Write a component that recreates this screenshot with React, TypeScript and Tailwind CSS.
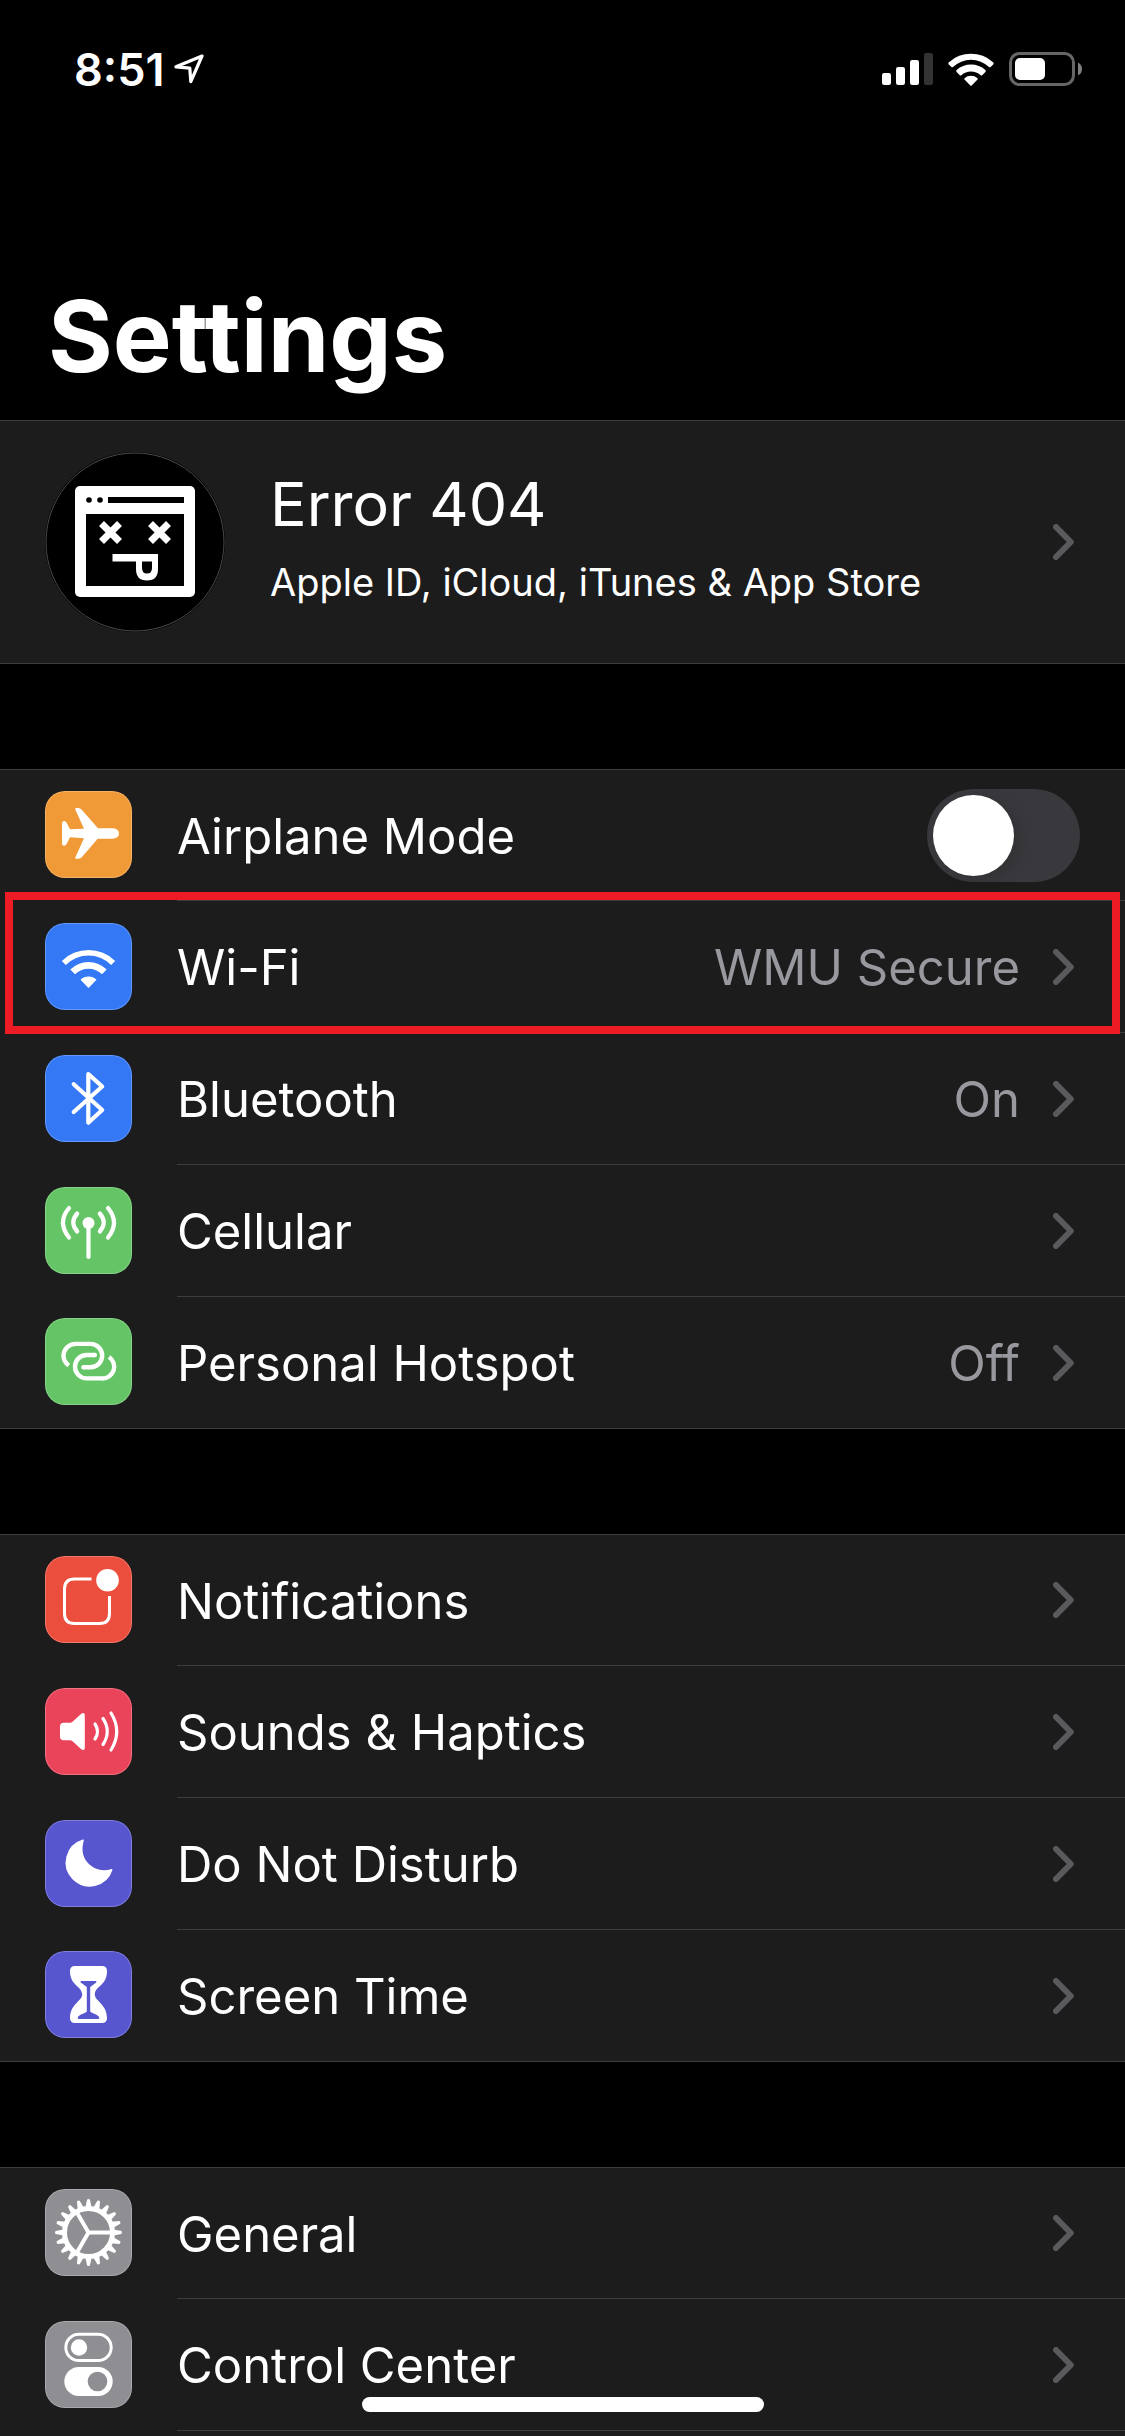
import React from 'react';

function LocationArrow() {
  return (
    <svg viewBox="0 0 30 30" className="size-[30px]" fill="none" stroke="white" strokeWidth="3.2" strokeLinejoin="round" aria-hidden="true">
      <path d="M28 2 L2 12.8 L15.8 14.2 L16.8 27.6 Z" />
    </svg>
  );
}

function SignalBars() {
  return (
    <svg viewBox="0 0 51 32" className="h-8 w-[51px]" fill="white" aria-hidden="true">
      <rect x="0" y="20" width="9" height="12" rx="2.2" />
      <rect x="14" y="14" width="9" height="18" rx="2.2" />
      <rect x="28" y="7" width="9" height="25" rx="2.2" />
      <rect x="42" y="0" width="9" height="32" rx="2.2" fill="#333333" />
    </svg>
  );
}

function StatusWifi() {
  return (
    <svg viewBox="0 0 46 33" className="h-[33px] w-[46px]" fill="white" aria-hidden="true">
      <path d="M1 9.2 A32.6 32.6 0 0 1 45 9.2 Q46.2 10.3 45.2 11.4 L42.6 14 Q41.8 14.7 41 14 A26 26 0 0 0 5 14 Q4.2 14.7 3.4 14 L.8 11.4 Q-.2 10.3 1 9.2 Z" />
      <path d="M8.6 17.1 A21.5 21.5 0 0 1 37.4 17.1 Q38.4 18.1 37.4 19.1 L34.2 22.2 Q33.4 22.9 32.6 22.2 A14.4 14.4 0 0 0 13.4 22.2 Q12.6 22.9 11.8 22.2 L8.6 19.1 Q7.6 18.1 8.6 17.1 Z" />
      <path d="M16.5 25.2 A10 10 0 0 1 29.5 25.2 Q30.2 25.9 29.5 26.6 L23.7 32.5 Q23 33 22.3 32.5 L16.5 26.6 Q15.8 25.9 16.5 25.2 Z" />
    </svg>
  );
}

function Battery() {
  return (
    <svg viewBox="0 0 73 34" className="h-[34px] w-[73px]" aria-hidden="true">
      <rect x="1.5" y="1.5" width="63" height="31" rx="9" fill="none" stroke="#666666" strokeWidth="3" />
      <rect x="6" y="6" width="30" height="22" rx="5" fill="white" />
      <path d="M69 10.5 Q73 12.5 73 17 Q73 21.5 69 23.5 Z" fill="#808080" />
    </svg>
  );
}

function Avatar() {
  return (
    <svg viewBox="0 0 180 180" className="size-[180px] shrink-0" aria-hidden="true">
      <circle cx="90" cy="90" r="90" fill="black" />
      <circle cx="90" cy="90" r="89" fill="none" stroke="#4a4a4a" strokeWidth="1" />
      <rect x="30" y="34" width="120" height="111" rx="5" fill="white" />
      <circle cx="44" cy="48" r="2.8" />
      <circle cx="55" cy="48" r="2.8" />
      <rect x="63" y="45" width="76" height="6" />
      <rect x="41" y="62" width="98" height="72" />
      <path d="M56.5 71.5 L74.5 89.5 M74.5 71.5 L56.5 89.5 M105.5 71.5 L123.5 89.5 M123.5 71.5 L105.5 89.5" stroke="white" strokeWidth="7" />
      <path fillRule="evenodd" fill="white" d="M67.5 102 H113 V117 Q113 128.5 102 128.5 Q91 128.5 91 117 V109.5 H67.5 Z M97 109.5 V116 Q97 121.5 102 121.5 Q107 121.5 107 116 V109.5 Z" />
    </svg>
  );
}

function Chevron() {
  return (
    <svg viewBox="0 0 21 36" className="h-9 w-[21px] shrink-0" fill="none" stroke="#5a5a5e" strokeWidth="6" strokeLinecap="round" strokeLinejoin="round" aria-hidden="true">
      <path d="M3 3 L17.8 18 L3 33" />
    </svg>
  );
}

const AirplaneGlyph = (
  <path
    fill="white"
    d="M53 37.3 H68 Q74 38 74 42.5 Q74 47 68 47.7 H52.7 L37 66 Q35.5 67.8 33.5 67.8 H31 Q29.8 67.8 30.3 66.5 L39 47.3 L25 46.3 L21.6 53 Q20.8 54.8 19 54.8 Q17 54.8 17 52.5 V32.5 Q17 30 19 30 Q20.8 30 21.6 31.8 L25 38.3 L39 37.7 L30.3 18.5 Q29.8 17 31 17 H33.5 Q35.2 17 36.5 18.5 Z"
  />
);

const WifiGlyph = (
  <g fill="white">
    <path d="M16.8 38 A37.9 37.9 0 0 1 70.2 38 L66.2 42 A32 32 0 0 0 20.8 42 Z" />
    <path d="M25.3 46.6 A25.8 25.8 0 0 1 61.7 46.6 L57 51.3 A19 19 0 0 0 30 51.3 Z" />
    <path d="M35.5 56.7 A11.6 11.6 0 0 1 51.5 56.7 L43.5 65 Z" />
  </g>
);

const BluetoothGlyph = (
  <path d="M28.7 29.2 L57.2 55 L43.3 67.7 V19 L57.2 31.5 L28.7 57" fill="none" stroke="white" strokeWidth="4.2" strokeLinecap="round" strokeLinejoin="round" />
);

const CellularGlyph = (
  <g fill="none" stroke="white" strokeWidth="4.2" strokeLinecap="round">
    <path d="M43.5 36 V70" />
    <circle cx="43.5" cy="36" r="6" fill="white" stroke="none" />
    <path d="M32.2 26.5 Q24.4 35.5 32.2 44.5 M54.8 26.5 Q62.6 35.5 54.8 44.5" />
    <path d="M24 21 Q12 35.5 24 50.5 M63 21 Q75 35.5 63 50.5" />
  </g>
);

const HotspotGlyph = (
  <g fill="none" stroke="white" strokeWidth="4.4">
    <path d="M23.8 47.5 Q18.5 43.5 18.5 37.5 A12 12 0 0 1 30.5 25.9 H45.5 A11.7 11.7 0 0 1 45.5 49.3 H38.5" strokeLinejoin="round" />
    <path d="M50 37 H41.7 A11.7 11.7 0 0 0 41.7 60.4 H56.7 A11.7 11.7 0 0 0 64 39" />
    <path d="M38.6 49.3 H38.4 M49.9 37 H49.7" strokeLinecap="round" />
  </g>
);

const NotificationsGlyph = (
  <g>
    <path d="M46.5 23 H29.5 Q19.5 23 19.5 33 V57.5 Q19.5 67.5 29.5 67.5 H54.5 Q64.5 67.5 64.5 57.5 V40" fill="none" stroke="white" strokeWidth="3" />
    <circle cx="62.5" cy="24.3" r="11.3" fill="white" />
  </g>
);

const SoundsGlyph = (
  <g>
    <path d="M18.5 34.7 H25 Q26.5 34.7 27.5 33.8 L36 26 Q38 24.3 39 25.3 Q39.8 26 39.8 27.5 V59.5 Q39.8 61.3 39 61.8 Q37.8 62.7 36 61 L27.5 53.2 Q26.5 52.3 25 52.3 H18.5 Q15 52.3 15 48.5 V38.5 Q15 34.7 18.5 34.7 Z" fill="white" />
    <path d="M50 36 Q55 43.5 50 51 M58 30.5 Q66.5 43.5 58 56.5 M66 25 Q77.5 43.5 66 62" fill="none" stroke="white" strokeWidth="3.2" strokeLinecap="round" />
  </g>
);

const MoonGlyph = (
  <path d="M38 20.3 A23.2 23.2 0 1 0 66.7 49.7 C50 55.5 32 41.5 38 20.3 Z" fill="white" stroke="white" strokeWidth="1.6" strokeLinejoin="round" />
);

const HourglassGlyph = (
  <g>
    <path
      fill="white"
      d="M30 15 H57 Q62 15 62 20 C62 35 49.8 35 49.8 43.5 C49.8 50 62 53 62 67 Q62 72 57 72 H30 Q25 72 25 67 C25 53 37.2 50 37.2 43.5 C37.2 35 25 35 25 20 Q25 15 30 15 Z"
    />
    <path
      fill="#5856ce"
      d="M36 30 H51 Q52 30.5 51.2 31.5 L45.2 36 V60.5 Q46 61.5 48.5 62.5 Q54.3 64.5 54.3 67 Q54.3 68 53 68 H34 Q32.7 68 32.7 67 Q32.7 64.5 38.5 62.5 Q41 61.5 41.8 60.5 V36 L35.8 31.5 Q35 30.5 36 30 Z"
    />
  </g>
);

const GearGlyph = (
  <g transform="translate(43.5 43.5)">
    {Array.from({ length: 20 }, (_, i) => (
      <path key={i} d="M23 -3.5 L27.5 -2.6 L33 -1.4 Q34 0 33 1.4 L27.5 2.6 L23 3.5 Z" fill="white" transform={`rotate(${i * 18})`} />
    ))}
    <circle r="24" fill="none" stroke="white" strokeWidth="5" />
    <path d="M0 0 H22 M0 0 L-11 -19.05 M0 0 L-11 19.05" stroke="white" strokeWidth="4" fill="none" />
  </g>
);

const TogglesGlyph = (
  <g>
    <rect x="20.8" y="13.2" width="45.4" height="26.4" rx="13.2" fill="none" stroke="white" strokeWidth="3" />
    <circle cx="34" cy="26.5" r="8.2" fill="white" />
    <rect x="19.3" y="46" width="48.4" height="29" rx="14.5" fill="white" />
    <circle cx="52.5" cy="60.5" r="9.8" fill="#8e8e93" />
  </g>
);

function IconTile({ color, glyph }: { color: string; glyph: React.ReactNode }) {
  return (
    <span className={`block size-[87px] shrink-0 overflow-hidden rounded-[20px] ${color}`}>
      <svg viewBox="0 0 87 87" className="size-full" aria-hidden="true">
        {glyph}
        <rect x="0.5" y="0.5" width="86" height="86" rx="19.5" fill="none" stroke="white" strokeOpacity="0.25" />
      </svg>
    </span>
  );
}

type Item = {
  label: string;
  color: string;
  glyph: React.ReactNode;
  value?: string;
  toggle?: boolean;
  highlighted?: boolean;
};

const groups: Item[][] = [
  [
    { label: 'Airplane Mode', color: 'bg-[#f09a37]', glyph: AirplaneGlyph, toggle: true },
    { label: 'Wi-Fi', color: 'bg-[#3478f6]', glyph: WifiGlyph, value: 'WMU Secure', highlighted: true },
    { label: 'Bluetooth', color: 'bg-[#3478f6]', glyph: BluetoothGlyph, value: 'On' },
    { label: 'Cellular', color: 'bg-[#65c466]', glyph: CellularGlyph },
    { label: 'Personal Hotspot', color: 'bg-[#65c466]', glyph: HotspotGlyph, value: 'Off' },
  ],
  [
    { label: 'Notifications', color: 'bg-[#eb4e3d]', glyph: NotificationsGlyph },
    { label: 'Sounds & Haptics', color: 'bg-[#ea445a]', glyph: SoundsGlyph },
    { label: 'Do Not Disturb', color: 'bg-[#5856ce]', glyph: MoonGlyph },
    { label: 'Screen Time', color: 'bg-[#5856ce]', glyph: HourglassGlyph },
  ],
  [
    { label: 'General', color: 'bg-[#8e8e93]', glyph: GearGlyph },
    { label: 'Control Center', color: 'bg-[#8e8e93]', glyph: TogglesGlyph },
  ],
];

function Row({ item, last }: { item: Item; last: boolean }) {
  const line = last ? '' : 'border-b border-[#3d3d3f]';
  return (
    <li className={`group relative ${last ? 'border-b border-[#3d3d3f]' : ''}`}>
      {item.toggle ? (
        <div className="flex items-stretch pl-[45px]">
          <span className="flex items-center pb-0.5">
            <IconTile color={item.color} glyph={item.glyph} />
          </span>
          <div className={`ml-[45px] flex h-[132px] flex-1 items-center justify-between pr-[45px] group-first:h-[131px] ${line}`}>
            <label htmlFor="airplane-mode" className="pt-0.5">
              {item.label}
            </label>
            <input
              id="airplane-mode"
              type="checkbox"
              role="switch"
              className="h-[93px] w-[153px] cursor-pointer appearance-none rounded-full bg-[#39393d] p-1.5 before:block before:size-[81px] before:rounded-full before:bg-white before:shadow-[6px_4px_16px_rgba(0,0,0,0.12)] checked:bg-[#65c466] checked:before:ml-auto"
            />
          </div>
        </div>
      ) : (
        <button type="button" className="flex w-full items-stretch pl-[45px] text-left">
          <span className="flex items-center pb-0.5">
            <IconTile color={item.color} glyph={item.glyph} />
          </span>
          <span className={`ml-[45px] flex flex-1 items-center pr-[51px] ${last ? 'h-[131px]' : 'h-[132px] group-first:h-[131px]'} ${line}`}>
            <span className="flex-1 pt-0.5">{item.label}</span>
            {item.value && <span className="mr-[33px] pt-0.5 text-[#98989f]">{item.value}</span>}
            <Chevron />
          </span>
        </button>
      )}
      {item.highlighted && <span className="pointer-events-none absolute -top-[9px] right-[5px] -bottom-px left-[5px] z-10 border-8 border-[#ed1c24]" />}
    </li>
  );
}

export default function App() {
  return (
    <div className="flex min-h-screen flex-col bg-black font-['Inter',sans-serif] text-[49px] leading-none text-white">
      <header>
        <div className="flex h-[138px] items-center justify-between pr-[43px] pl-[74px]">
          <div className="flex items-center gap-2.5">
            <time className="text-[45px] font-semibold">8:51</time>
            <LocationArrow />
          </div>
          <div className="flex items-center gap-[15px]">
            <SignalBars />
            <StatusWifi />
            <Battery />
          </div>
        </div>
        <h1 className="mt-[138px] mb-6 px-12 text-[99px] leading-[120px] font-bold">Settings</h1>
      </header>

      <main className="flex flex-1 flex-col gap-[105px]">
        <button type="button" className="flex h-[244px] shrink-0 items-center border-y border-[#3d3d3f] bg-[#1c1c1c] pr-[51px] pl-[45px] text-left">
          <Avatar />
          <span className="ml-[45px] flex flex-1 flex-col">
            <span className="text-[61px] leading-[80px]">Error 404</span>
            <span className="text-[38px] leading-[76px]">Apple ID, iCloud, iTunes &amp; App Store</span>
          </span>
          <Chevron />
        </button>

        {groups.map((items, g) => (
          <ul key={g} className="shrink-0 border-t border-[#3d3d3f] bg-[#1c1c1c] last:flex-1">
            {items.map((item, i) => (
              <Row key={item.label} item={item} last={g < groups.length - 1 && i === items.length - 1} />
            ))}
          </ul>
        ))}
      </main>

      <div className="fixed bottom-6 left-1/2 z-20 h-[15px] w-[402px] -translate-x-1/2 rounded-full bg-white" />
    </div>
  );
}
